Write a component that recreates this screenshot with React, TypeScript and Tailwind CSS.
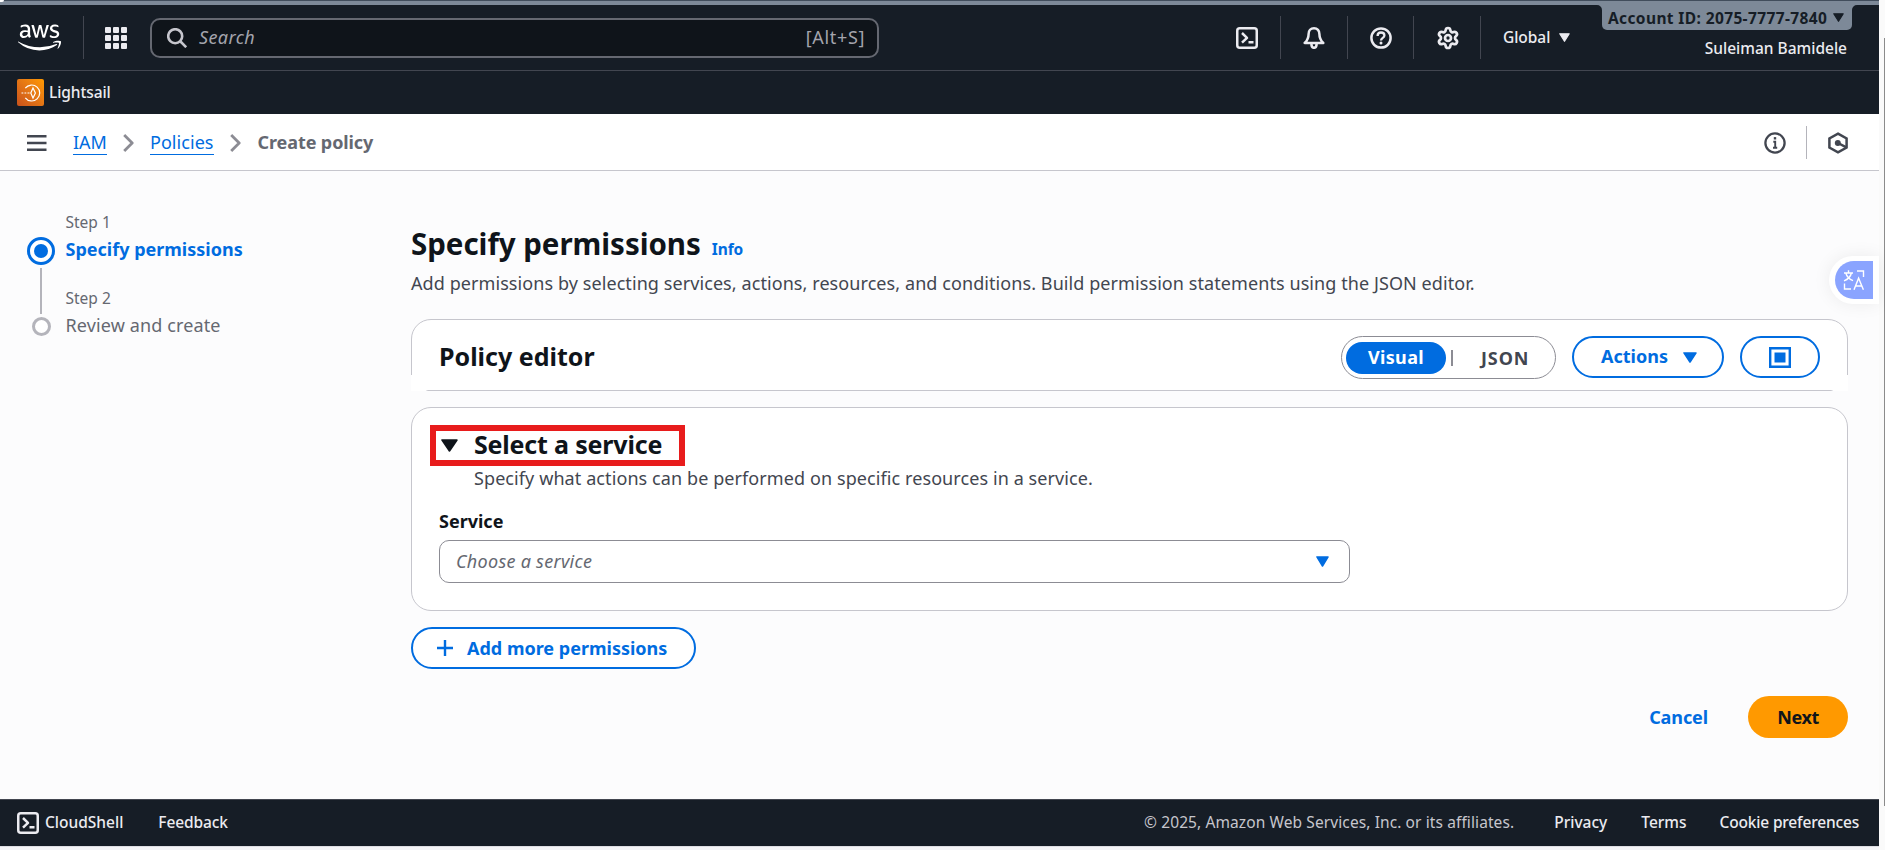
import type { ReactNode } from "react";
import { Settings } from "lucide-react";
import { FaAws } from "react-icons/fa";

const Triangle = ({ className }: { className: string }) => (
  <svg viewBox="0 0 14 12" preserveAspectRatio="none" className={className} fill="currentColor" stroke="currentColor" strokeWidth="1.6" strokeLinejoin="round">
    <path d="M1 1h12L7 11z" />
  </svg>
);

const Terminal = ({ className }: { className: string }) => (
  <svg viewBox="0 0 22 22" className={className} fill="none" stroke="currentColor" strokeWidth="2.5" strokeLinejoin="round">
    <rect x="1.25" y="1.25" width="19.5" height="19.5" rx="2.5" />
    <path d="M6 6l5 4.8-5 4.8M12.5 15.2h5" />
  </svg>
);

const Chevron = () => (
  <svg viewBox="0 0 11 18" className="h-[18px] w-[11px]" fill="none" stroke="#8c8c94" strokeWidth="2.8" strokeLinejoin="round">
    <path d="M1.2 1l8 8-8 8" />
  </svg>
);

const HeaderIcon = ({ children, className }: { children: ReactNode; className: string }) => (
  <div className={`flex h-[43px] shrink-0 items-center justify-center border-r border-[#424650] text-[#ebebf0] ${className}`}>{children}</div>
);

function TopBar() {
  return (
    <header className="bg-[#161d26] text-[#ebebf0]">
      <div className="h-[5px] border-t border-[#414d5c] bg-[#7d8998]" />
      <div className="flex h-[66px] items-center border-b border-[#424650]">
        <FaAws className="ml-[18px] h-[35px] w-[43px] shrink-0 text-white" />
        <div className="ml-[22px] h-[43px] w-px bg-[#424650]" />
        <svg viewBox="0 0 22 22" className="ml-[21px] h-[22px] w-[22px]" fill="currentColor">
          {[0, 8, 16].map((y) => [0, 8, 16].map((x) => <rect key={`${x}-${y}`} x={x} y={y} width="6" height="6" rx="1" />))}
        </svg>
        <div className="ml-[23px] flex h-10 w-[729px] items-center rounded-[10px] border-2 border-[#656871] bg-[#0f141a] pr-[12px] pl-[15px] text-[18px]">
          <svg viewBox="0 0 20 20" className="h-5 w-5" fill="none" stroke="#c6c6cd" strokeWidth="2.6">
            <circle cx="8.2" cy="8.2" r="7" />
            <path d="M13 13l6.2 6.2" />
          </svg>
          <span className="mb-[2px] ml-3 grow leading-6 tracking-[0.4px] text-[#a4a4ad] italic">Search</span>
          <span className="mb-[2px] leading-6 tracking-[0.65px] text-[#a4a4ad]">[Alt+S]</span>
        </div>
        <HeaderIcon className="ml-[334px] w-[68px]"><Terminal className="h-[22px] w-[22px]" /></HeaderIcon>
        <HeaderIcon className="w-[67px]">
          <svg viewBox="0 0 22 22" className="h-[22px] w-[22px]" fill="none" stroke="currentColor" strokeWidth="2.5" strokeLinejoin="round">
            <path d="M11 1.3c-3.4 0-5.4 2.4-5.4 5.6 0 4.2-.9 6.2-3.9 9.1h18.6c-3-2.9-3.9-4.9-3.9-9.1 0-3.2-2-5.6-5.4-5.6z" />
            <path d="M8.4 16.8c0 3.2 1.2 4 2.6 4s2.6-.8 2.6-4" />
          </svg>
        </HeaderIcon>
        <HeaderIcon className="w-[66px]">
          <svg viewBox="0 0 22 22" className="h-[22px] w-[22px]" fill="none" stroke="currentColor" strokeWidth="2.5">
            <circle cx="11" cy="11" r="9.6" />
            <path d="M7.6 9c0-2.3 1.4-3.5 3.4-3.5s3.4 1.2 3.4 2.9c0 2.4-3.4 2.5-3.4 5.1" strokeWidth="2.3" />
            <circle cx="11" cy="16" r="1.5" fill="currentColor" stroke="none" />
          </svg>
        </HeaderIcon>
        <HeaderIcon className="w-[67px] pl-px"><Settings className="h-6 w-6" strokeWidth={2.7} /></HeaderIcon>
        <span className="mb-px ml-[22px] text-[15.5px] leading-6 font-medium tracking-[-0.05px]">Global</span>
        <Triangle className="ml-[9px] h-[9px] w-[11px]" />
        <div className="ml-auto flex h-[65px] flex-col items-end pr-[27px]">
          <div className="relative flex h-[25px] w-[250px] items-center rounded-b-[5px] bg-[#7d8998] pl-[6px] text-[#161d26]">
            <span className="text-[15.5px] leading-[26px] font-bold tracking-[0.38px] whitespace-nowrap">Account ID: 2075-7777-7840</span>
            <Triangle className="ml-[6px] h-[9px] w-[11px]" />
            <svg viewBox="0 0 5 5" className="absolute top-0 -left-[5px] h-[5px] w-[5px]" fill="#7d8998"><path d="M0 0h5v5a5 5 0 0 0-5-5z" /></svg>
            <svg viewBox="0 0 5 5" className="absolute top-0 -right-[5px] h-[5px] w-[5px]" fill="#7d8998"><path d="M5 0H0v5a5 5 0 0 1 5-5z" /></svg>
          </div>
          <span className="mt-[6px] mr-[5px] text-[15.5px] leading-6 font-medium whitespace-nowrap">Suleiman Bamidele</span>
        </div>
      </div>
      <div className="flex h-[43px] items-center pl-[17px]">
        <div className="flex h-[27px] w-[27px] items-center justify-center rounded-[2px] bg-linear-to-tr from-[#c8511b] to-[#f90]">
          <svg viewBox="0 0 20 18" className="h-[18px] w-5" fill="none" stroke="#fff" strokeWidth="1.2">
            <path d="M4.300 4.200a8 8 0 1 1 0 9.600" />
            <path d="M12 4l2.400 5L12 14 9.800 9z" />
            <path d="M.5 9h1.800M3.500 9h1.800M6.500 9h2" strokeWidth="1.200" />
          </svg>
        </div>
        <span className="mb-px ml-[5px] text-[15.5px] leading-6 font-medium tracking-[-0.1px]">Lightsail</span>
      </div>
    </header>
  );
}

function Breadcrumbs() {
  return (
    <nav className="flex h-[57px] items-center border-b border-[#c6c6cd] bg-white pl-[27px] text-[18px]">
      <svg viewBox="0 0 20 16" className="mt-px h-4 w-5" stroke="#424650" strokeWidth="2.4">
        <path d="M0 1.200h19.500M0 8h19.500M0 14.800h19.500" />
      </svg>
      <span className="ml-[26px] h-[25px] border-b border-[#006ce0] leading-[25px] text-[#006ce0]">IAM</span>
      <span className="mt-px ml-[16px]"><Chevron /></span>
      <span className="ml-[16px] h-[25px] border-b border-[#006ce0] leading-[25px] tracking-[0.06px] text-[#006ce0]">Policies</span>
      <span className="mt-px ml-[16px]"><Chevron /></span>
      <span className="ml-[17px] leading-6 font-bold tracking-[-0.1px] text-[#656871]">Create policy</span>
      <div className="mt-px ml-auto flex items-center pr-[31px] text-[#424650]">
        <svg viewBox="0 0 22 22" className="h-[22px] w-[22px]" fill="none" stroke="currentColor" strokeWidth="2.3">
          <circle cx="11" cy="11" r="9.6" />
          <path d="M9.300 9.800h1.900V16M9 15.800h4.200" strokeWidth="1.900" />
          <path d="M9.800 6.300h2.400" strokeWidth="2.400" />
        </svg>
        <div className="ml-[20px] h-[33px] w-px bg-[#b4b4bb]" />
        <svg viewBox="0 0 20 22" className="ml-[21px] h-[22px] w-5" fill="none" stroke="currentColor" strokeWidth="2.5">
          <path d="M10 1.700l8.600 4.700v9.200L10 20.300l-8.600-4.700V6.400z" />
          <circle cx="9.8" cy="11" r="3" fill="currentColor" stroke="none" />
          <path d="M10 11l8.400 4.400" />
        </svg>
      </div>
    </nav>
  );
}

function Steps() {
  return (
    <aside className="flex w-[411px] shrink-0 pt-[40px] pl-[27px]">
      <div className="flex w-7 flex-col items-center pt-[26px]">
        <div className="flex h-7 w-7 items-center justify-center rounded-full border-[3px] border-[#006ce0] bg-white">
          <div className="h-[14px] w-[14px] rounded-full bg-[#006ce0]" />
        </div>
        <div className="mt-[3px] h-[46px] w-[2px] bg-[#b4b4bb]" />
        <div className="mt-[3px] h-[19px] w-[19px] rounded-full border-[3px] border-[#b4b4bb] bg-white" />
      </div>
      <div className="ml-[10.5px] flex flex-col">
        <span className="-mt-px text-[15.5px] leading-6 text-[#656871]">Step 1</span>
        <span className="mt-[3px] text-[18px] leading-6 font-bold text-[#006ce0]">Specify permissions</span>
        <span className="mt-[25px] text-[15.5px] leading-6 text-[#656871]">Step 2</span>
        <span className="mt-[3px] text-[18px] leading-6 tracking-[0.12px] text-[#656871]">Review and create</span>
      </div>
    </aside>
  );
}

function PolicyEditorHeader() {
  return (
    <section className="relative mt-6 flex h-[72px] items-center rounded-t-[20px] border border-[#c6c6cd] bg-white pr-[27px] pl-[27px]">
      <div className="absolute -bottom-px -left-px h-[16px] w-[17px] bg-linear-to-r from-white from-85% to-transparent" />
      <div className="absolute -right-px -bottom-px h-[16px] w-[17px] bg-linear-to-l from-white from-85% to-transparent" />
      <h2 className="mt-[2px] text-[25px] leading-[34px] font-bold text-[#0f141a]">Policy editor</h2>
      <div className="mt-[5px] ml-auto flex h-[43px] w-[215px] items-center rounded-full border border-[#8c8c94] pl-[4px] text-[18px] font-bold">
        <span className="flex h-8 w-[100px] items-center justify-center rounded-full bg-[#006ce0] tracking-[0.35px] text-white">Visual</span>
        <span className="ml-[5px] h-4 w-[2px] bg-[#8c8c94]" />
        <span className="ml-[28px] leading-6 tracking-[0.9px] text-[#424650]">JSON</span>
      </div>
      <button className="mt-[4px] ml-4 flex h-[42px] w-[152px] items-center rounded-full border-2 border-[#006ce0] pl-[27px] text-[18px] font-bold text-[#006ce0]">
        <span className="mb-[2px] leading-6">Actions</span>
        <Triangle className="ml-[15px] h-[11px] w-[14px]" />
      </button>
      <button className="mt-[4px] ml-4 flex h-[42px] w-[80px] items-center justify-center rounded-full border-2 border-[#006ce0]">
        <svg viewBox="0 0 22 21" className="h-[21px] w-[22px]"><path d="M1.200 1.200h19.600v18.600H1.200z" fill="none" stroke="#006ce0" strokeWidth="2.4" /><path d="M5.500 5.500h11v10h-11z" fill="#006ce0" /></svg>
      </button>
    </section>
  );
}

function ServicePanel() {
  return (
    <section className="relative mt-4 flex h-[204px] flex-col rounded-[20px] border border-[#c6c6cd] bg-white pt-[21px] pl-[27px]">
      <div className="absolute top-[17px] left-[18px] h-[41px] w-[255px] border-[6px] border-[#e81c1c]" />
      <div className="flex items-center pl-[2px]">
        <Triangle className="mt-[2px] h-[13px] w-[17px] text-[#0f141a]" />
        <h2 className="ml-[16px] text-[25px] leading-[30px] font-bold tracking-[-0.18px] text-[#0f141a]">Select a service</h2>
      </div>
      <p className="mt-[7px] pl-[35px] text-[18px] leading-6 tracking-[0.09px] text-[#424650]">Specify what actions can be performed on specific resources in a service.</p>
      <label className="mt-[19px] text-[18px] leading-6 font-bold text-[#0f141a]">Service</label>
      <div className="mt-[7px] flex h-[43px] w-[911px] items-center rounded-[10px] border border-[#8c8c94] pr-[20px] pl-4">
        <span className="mb-[2px] grow text-[18px] leading-6 tracking-[0.28px] text-[#656871] italic">Choose a service</span>
        <Triangle className="h-[11px] w-[13px] text-[#006ce0]" />
      </div>
    </section>
  );
}

function Footer() {
  return (
    <footer className="flex h-[47px] items-center border-t border-[#424650] bg-[#161d26] pl-[17px] text-[15.5px] leading-6 font-medium text-[#ebebf0]">
      <Terminal className="h-[22px] w-[22px]" />
      <span className="mb-[2px] ml-[6px]">CloudShell</span>
      <span className="mb-[2px] ml-[35px] tracking-[-0.1px]">Feedback</span>
      <span className="mb-[2px] ml-auto font-normal tracking-[0.1px] text-[#c6c6cd]">© 2025, Amazon Web Services, Inc. or its affiliates.</span>
      <span className="mb-[2px] ml-[40px]">Privacy</span>
      <span className="mb-[2px] ml-[34px]">Terms</span>
      <span className="mr-[20px] mb-[2px] ml-[33px] tracking-[-0.18px]">Cookie preferences</span>
    </footer>
  );
}

export default function App() {
  return (
    <div className="flex h-[850px] w-[1885px] overflow-hidden bg-[#fcfcfd] font-['Noto_Sans','Open_Sans',sans-serif]">
      <div className="relative flex w-[1879px] shrink-0 flex-col">
        <div className="absolute top-0 left-0 h-[2px] w-[4px] rounded-br-full bg-white" />
        <TopBar />
        <Breadcrumbs />
        <div className="flex grow">
          <Steps />
          <main className="w-[1437px] pt-[55px]">
            <div className="flex items-baseline">
              <h1 className="text-[29.5px] leading-9 font-bold tracking-[-0.03px] text-[#0f141a]">Specify permissions</h1>
              <span className="ml-[11px] text-[15.5px] font-bold tracking-[-0.1px] text-[#006ce0]">Info</span>
            </div>
            <p className="mt-[9px] text-[18px] leading-6 tracking-[0.08px] text-[#424650]">
              Add permissions by selecting services, actions, resources, and conditions. Build permission statements using the JSON editor.
            </p>
            <PolicyEditorHeader />
            <ServicePanel />
            <button className="mt-4 flex h-[42px] w-[285px] items-center rounded-full border-2 border-[#006ce0] bg-white pl-[24px] text-[18px] font-bold text-[#006ce0]">
              <svg viewBox="0 0 16 16" className="h-4 w-4" stroke="currentColor" strokeWidth="2.4"><path d="M8 0v16M0 8h16" /></svg>
              <span className="ml-[14px] leading-6">Add more permissions</span>
            </button>
            <div className="mt-[27px] flex h-[42px] items-center justify-end text-[18px] font-bold">
              <span className="leading-6 tracking-[-0.1px] text-[#006ce0]">Cancel</span>
              <button className="ml-[40px] flex h-[42px] w-[100px] items-center justify-center rounded-full bg-[#f90] tracking-[-0.4px] text-[#0f141a]">Next</button>
            </div>
          </main>
        </div>
        <div className="absolute top-[256px] right-0 flex h-[48px] w-[50px] items-center rounded-l-full bg-white pl-[6px] shadow-[0_0_18px_rgba(0,0,0,0.07)]">
          <div className="flex h-[38px] w-[38px] items-center justify-center rounded-l-full rounded-r-[3px] bg-[#8aa4ff]">
            <svg viewBox="0 0 22 22" className="h-[22px] w-[22px]" fill="none" stroke="#fff" strokeWidth="1.4">
              <path d="M1 4h9M5.500 1.200V4M2.800 4c1 3.600 3.600 6.300 7.200 7.600M8.400 4c-.8 3.600-3.600 6.400-7.400 7.800M14 2h6.500v6M1.500 14.500V20H8M11 20.800l4.600-11.600 4.800 11.600M12.600 17h6.200" />
            </svg>
          </div>
        </div>
        <Footer />
        <div className="h-1 border-t border-[#dedee3] bg-[#f5f5f7]" />
      </div>
      <div className="flex grow justify-end bg-[#fafafa] pt-[38px]">
        <div className="h-[768px] w-px bg-[#8b8b8b]" />
      </div>
    </div>
  );
}
